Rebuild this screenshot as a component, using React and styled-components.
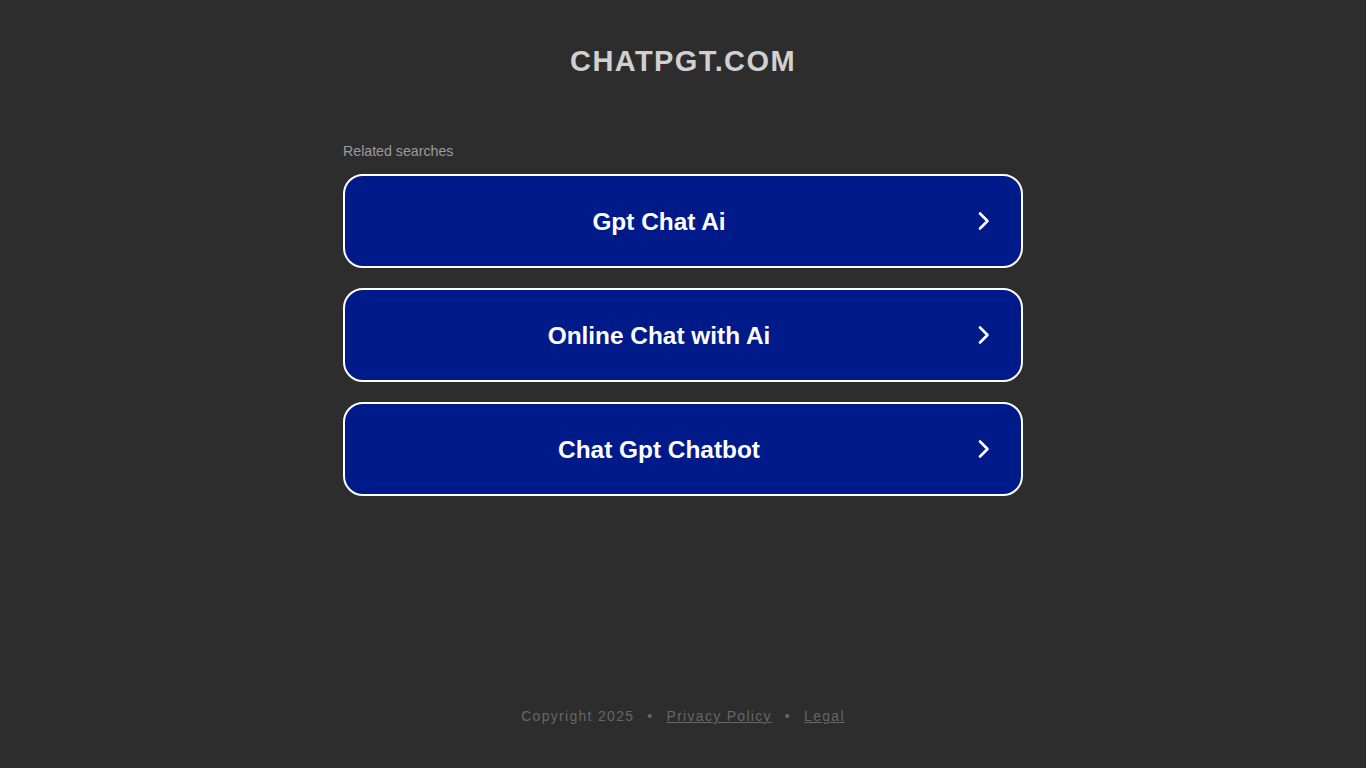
import React from 'react'
import styled, { createGlobalStyle } from 'styled-components'

const Global = createGlobalStyle`
html, body {
  margin:0;
  padding:0;
  background-color:#2d2d2d;
  font-family:"Liberation Sans", Arial, sans-serif;
}
`

const searches = ['Gpt Chat Ai', 'Online Chat with Ai', 'Chat Gpt Chatbot']

export default function App() {
  return (
    <>
      <Global />
      <Page>
        <Header>CHATPGT.COM</Header>
        <Main>
          <Label>Related searches</Label>
          <List>
            {searches.map((s) => (
              <SearchButton key={s} href="#">
                <span className="text">{s}</span>
                <Arrow viewBox="0 0 24 24">
                  <path d="M9 4.5l7.5 7.5-7.5 7.5" />
                </Arrow>
              </SearchButton>
            ))}
          </List>
        </Main>
        <Footer>
          <span>Copyright 2025</span>
          <Dot>•</Dot>
          <FootLink href="#">Privacy Policy</FootLink>
          <Dot>•</Dot>
          <FootLink href="#">Legal</FootLink>
        </Footer>
      </Page>
    </>
  )
}

const Page = styled.div`
  height:768px;
  display:flex;
  flex-direction:column;
  align-items:center;
`

const Header = styled.div`
  margin-top:44px;
  font-size:29px;
  font-weight:700;
  letter-spacing:1.4px;
  color:#d0d0d0;
  line-height:34px;
`

const Main = styled.div`
  width:680px;
  margin-top:64px;
`

const Label = styled.div`
  font-size:14.2px;
  color:#9a9a9a;
  line-height:18px;
  margin-bottom:14px;
`

const List = styled.div`
  display:flex;
  flex-direction:column;
  gap:20px;
`

const SearchButton = styled.a`
  box-sizing:border-box;
  height:94px;
  border:2px solid #ffffff;
  border-radius:20px;
  background-color:#001a8a;
  display:flex;
  align-items:center;
  justify-content:center;
  position:relative;
  text-decoration:none;
  color:#ffffff;
  .text{
    font-size:24.4px;
    font-weight:700;
    margin-right:48px;
    padding-top:2px;
  }
`

const Arrow = styled.svg`
  position:absolute;
  right:26px;
  top:50%;
  width:24px;
  height:24px;
  margin-top:-12px;
  fill:none;
  stroke:#ffffff;
  stroke-width:2.6;
  stroke-linecap:round;
  stroke-linejoin:round;
`

const Footer = styled.div`
  margin-top:auto;
  margin-bottom:44px;
  font-size:14px;
  letter-spacing:1.3px;
  color:#666666;
  display:flex;
  align-items:center;
`

const Dot = styled.span`
  margin:0 13px;
`

const FootLink = styled.a`
  color:#666666;
  text-decoration:underline;
`
